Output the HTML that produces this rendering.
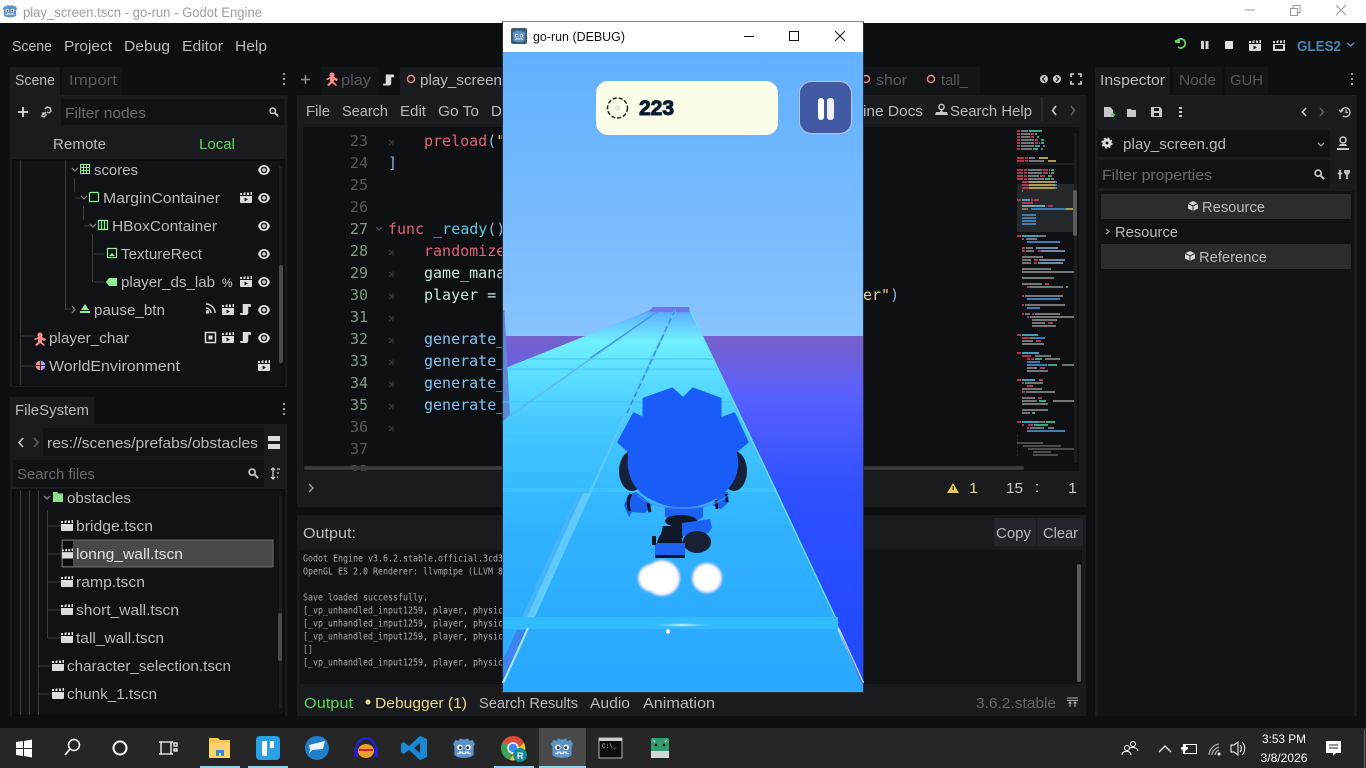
<!DOCTYPE html>
<html><head><meta charset="utf-8"><title>go-run</title>
<style>
html,body{margin:0;padding:0;width:1366px;height:768px;overflow:hidden;background:#0e0f11}
svg{display:block;position:absolute;left:0;top:0}
text{font-family:"Liberation Sans",sans-serif;font-size:15px;fill:#b9babc}
.d{fill:#57585c}
.m{font-family:"DejaVu Sans Mono","Liberation Mono",monospace;font-size:15px}
.l{font-family:"DejaVu Sans Mono","Liberation Mono",monospace;font-size:10px;fill:#a9aaac}
.n{fill:#55585a;text-anchor:end}
.g{fill:#7d9c80;text-anchor:end}
</style></head><body>
<svg width="1366" height="768" viewBox="0 0 1366 768" xmlns="http://www.w3.org/2000/svg">
<defs>
<symbol id="god" viewBox="0 0 16 16"><path d="M5 1l3 1 3-1 1 2 2-1 2 3-1 2v6c-2 3-12 3-14 0V7L0 5l2-3 2 1z" fill="#5c93c8"/><circle cx="5" cy="7.5" r="2" fill="#fff"/><circle cx="11" cy="7.5" r="2" fill="#fff"/><circle cx="5.3" cy="7.7" r="1" fill="#223"/><circle cx="10.7" cy="7.7" r="1" fill="#223"/><path d="M3 12h2v-1h2v1h2v-1h2v1h2" stroke="#dfe9f5" fill="none"/></symbol>
<symbol id="clap" viewBox="0 0 12 11"><path d="M0 4h12v6a1 1 0 0 1-1 1H1a1 1 0 0 1-1-1zM0 1h2v2H0zM3.500 1l2-1v3h-2zM7 .5h2V3H7zM10.500 0H12v3h-1.500z" fill="#dcdcde"/></symbol>
<symbol id="clapp" viewBox="0 0 12 11"><path d="M0 4h12v6a1 1 0 0 1-1 1H1a1 1 0 0 1-1-1zM0 1h2v2H0zM3.500 1l2-1v3h-2zM7 .5h2V3H7zM10.500 0H12v3h-1.500z" fill="#dcdcde"/><path d="M4.500 5.500l3.500 2-3.500 2z" fill="#18191c"/></symbol>
<symbol id="scr" viewBox="0 0 12 12"><path d="M3 0h8c1 0 1 2 1 3H9v6c0 2-1 3-2 3H1c-1 0-1-1-1-2h3z" fill="#dcdcde"/></symbol>
<symbol id="eye" viewBox="0 0 12 10"><path d="M6 0c3.300 0 5.500 3 6 5-.5 2-2.700 5-6 5S.5 7 0 5c.5-2 2.700-5 6-5z" fill="#dcdcde"/><circle cx="6" cy="5" r="3.200" fill="#15161a"/><circle cx="6" cy="5" r="1.700" fill="#dcdcde"/></symbol>
<symbol id="mag" viewBox="0 0 12 12"><circle cx="4.500" cy="4.500" r="3.300" fill="none" stroke="#c8c8ca" stroke-width="1.800"/><path d="M7 7l4 4" stroke="#c8c8ca" stroke-width="2.200"/></symbol>
<linearGradient id="sky" x1="0" y1="0" x2="0" y2="1"><stop offset="0" stop-color="#62b0ff"/><stop offset="1" stop-color="#87c3ff"/></linearGradient>
<linearGradient id="sea" x1="0" y1="0" x2="0" y2="1"><stop offset="0" stop-color="#7660cc"/><stop offset=".08" stop-color="#6a60e0"/><stop offset=".16" stop-color="#5a60ff"/><stop offset=".45" stop-color="#2c50ff"/><stop offset="1" stop-color="#2248ff"/></linearGradient>
<linearGradient id="road" gradientUnits="userSpaceOnUse" x1="0" y1="307" x2="0" y2="692"><stop offset="0" stop-color="#6a78ee"/><stop offset=".02" stop-color="#60b4ff"/><stop offset=".09" stop-color="#70f0ff"/><stop offset=".17" stop-color="#5cdfff"/><stop offset=".3" stop-color="#46c8ff"/><stop offset=".47" stop-color="#36baff"/><stop offset=".6" stop-color="#30b0ff"/><stop offset="1" stop-color="#2aa8ff"/></linearGradient>
<radialGradient id="gl"><stop offset="0" stop-color="#e8fcff"/><stop offset="1" stop-color="#35c4ff" stop-opacity="0"/></radialGradient>
<filter id="soft" x="-20%" y="-20%" width="140%" height="140%"><feGaussianBlur stdDeviation="1"/></filter>
<clipPath id="codeclip"><rect x="303" y="127" width="776" height="344"/></clipPath>
<clipPath id="logclip"><rect x="300" y="550" width="782" height="134"/></clipPath>
</defs>

<!-- base -->
<rect width="1366" height="768" fill="#0e0f11"/>
<!-- title bar -->
<rect width="1366" height="23" fill="#fff"/>
<use href="#god" x="3" y="4" width="14" height="14"/>
<text x="23" y="17" style="font-size:13.500px;fill:#9d9da3" textLength="239" lengthAdjust="spacingAndGlyphs">play_screen.tscn - go-run - Godot Engine</text>
<path d="M1245 10h10" stroke="#999" stroke-width="1"/>
<path d="M1290.500 8.500h7v7h-7zM1293 8V5.500h7v7h-2" fill="none" stroke="#999"/>
<path d="M1336 5l10 10M1346 5l-10 10" stroke="#999"/>

<!-- menu -->
<text x="12" y="51" textLength="40" lengthAdjust="spacingAndGlyphs">Scene</text>
<text x="64" y="51" textLength="48" lengthAdjust="spacingAndGlyphs">Project</text>
<text x="124" y="51" textLength="46" lengthAdjust="spacingAndGlyphs">Debug</text>
<text x="182" y="51" textLength="41" lengthAdjust="spacingAndGlyphs">Editor</text>
<text x="235" y="51" textLength="32" lengthAdjust="spacingAndGlyphs">Help</text>
<!-- run bar -->
<path d="M1176.500 42a4.500 4.500 0 1 1 1.500 5" fill="none" stroke="#5fd35f" stroke-width="1.800"/><path d="M1175 40h5v3h-5z" fill="#5fd35f"/>
<path d="M1201 41h3v8h-3zM1205.500 41h3v8h-3z" fill="#d0d0d2"/>
<rect x="1225" y="41" width="8" height="8" rx="1" fill="#e0e0e2"/>
<use href="#clapp" x="1249" y="40" width="12" height="11"/>
<use href="#clap" x="1273" y="40" width="12" height="11"/>
<rect x="1275" y="45" width="8" height="4" fill="#18191c"/>
<text x="1297" y="51" style="font-weight:bold;fill:#4a86ad;font-size:15px" textLength="44" lengthAdjust="spacingAndGlyphs">GLES2</text>
<path d="M1347 43l3.500 3 3.500-3" fill="none" stroke="#4a86ad" stroke-width="1.500"/>

<!-- LEFT: Scene dock -->
<rect x="10" y="67" width="50" height="28" fill="#1a1b1e"/>
<rect x="62" y="67" width="60" height="28" fill="#131417"/>
<text x="15" y="85" textLength="40" lengthAdjust="spacingAndGlyphs">Scene</text>
<text x="69" y="85" class="d" textLength="48" lengthAdjust="spacingAndGlyphs">Import</text>
<path d="M283 73h2v2h-2zM283 78h2v2h-2zM283 83h2v2h-2z" fill="#a0a0a2"/>
<rect x="10" y="95" width="277" height="292" fill="#1a1b1e"/>
<path d="M23 107v10M18 112h10" stroke="#dcdcde" stroke-width="1.800"/>
<path d="M43 115l3-3m-1-3l2-2 3 1 1 3-2 2-2-1M42 116l1-3 2 0 1 2-2 2z" fill="none" stroke="#b8b8ba" stroke-width="1.500"/>
<rect x="61" y="99" width="223" height="26" fill="#111215"/>
<text x="65" y="118" style="fill:#686a6e" textLength="81" lengthAdjust="spacingAndGlyphs">Filter nodes</text>
<use href="#mag" x="269" y="107" width="10" height="10"/>
<text x="53" y="149" textLength="53" lengthAdjust="spacingAndGlyphs">Remote</text>
<text x="199" y="149" style="fill:#5fd35f" textLength="36" lengthAdjust="spacingAndGlyphs">Local</text>
<rect x="13" y="160" width="271" height="225" fill="#111215"/>
<rect x="13" y="160" width="271" height="225" fill="none" stroke="#0c0d0f" stroke-width="2"/>
<path d="M20.500 160v225M65.500 160v150M74.500 178v14M83.500 206v14M92.500 234v48M94 254h10M94 282h10M66 309h5M21 336h14M21 366h14M75 198h5M84 226h5" stroke="#3a3b3e" fill="none"/>
<path d="M72 168l3 3 3-3M81 196l3 3 3-3M90 224l3 3 3-3" fill="none" stroke="#808184" stroke-width="1.300"/>
<path d="M72 306l3 3.500-3 3.500" fill="none" stroke="#808184" stroke-width="1.300"/>
<!-- node icons -->
<path d="M80.500 164.500h9v9h-9zM83.500 164.500v9M86.500 164.500v9M80.500 167.500h9M80.500 170.500h9" fill="none" stroke="#8eef97"/>
<rect x="89.500" y="192.500" width="9" height="9" rx="1" fill="none" stroke="#8eef97" stroke-width="1.200"/>
<path d="M98.500 220.500h9v9h-9zM101.500 220.500v9M104.500 220.500v9" fill="none" stroke="#8eef97" stroke-width="1.200"/>
<rect x="107.500" y="248.500" width="9" height="9" fill="none" stroke="#8eef97" stroke-width="1.200"/><path d="M109 256l3-3 3 3z" fill="#8eef97"/>
<path d="M109 278h8v8h-8l-3-4z" fill="#8eef97"/>
<path d="M85 304l4 6h-8zM80 311h10v2H80z" fill="#8eef97"/>
<g fill="#ff8a8a"><circle cx="40" cy="335" r="2.500"/><path d="M38 337h4l4 2-1 2-3-1v2l3 3-1 1-4-3-3 3-2-1 3-3v-3l-3 1-1-1z"/></g>
<circle cx="40.500" cy="365.500" r="4.800" fill="#a8a0f0"/><path d="M40.500 360.700a4.800 4.800 0 0 0 0 9.600z" fill="#ff8a8a"/><path d="M35.700 365.500h10M40.500 360.700v10" stroke="#15161a" stroke-width=".8"/>
<!-- tree labels -->
<text x="94" y="175" textLength="44" lengthAdjust="spacingAndGlyphs">scores</text>
<text x="103" y="203" textLength="117" lengthAdjust="spacingAndGlyphs">MarginContainer</text>
<text x="112" y="231" textLength="105" lengthAdjust="spacingAndGlyphs">HBoxContainer</text>
<text x="121" y="259" textLength="81" lengthAdjust="spacingAndGlyphs">TextureRect</text>
<text x="121" y="287" textLength="94" lengthAdjust="spacingAndGlyphs">player_ds_lab</text>
<text x="94" y="315" textLength="71" lengthAdjust="spacingAndGlyphs">pause_btn</text>
<text x="49" y="343" textLength="80" lengthAdjust="spacingAndGlyphs">player_char</text>
<text x="49" y="371" textLength="131" lengthAdjust="spacingAndGlyphs">WorldEnvironment</text>
<g>
<use href="#eye" x="258" y="165" width="12" height="10"/>
<use href="#eye" x="258" y="193" width="12" height="10"/>
<use href="#eye" x="258" y="221" width="12" height="10"/>
<use href="#eye" x="258" y="249" width="12" height="10"/>
<use href="#eye" x="258" y="277" width="12" height="10"/>
<use href="#eye" x="258" y="305" width="12" height="10"/>
<use href="#eye" x="258" y="333" width="12" height="10"/>
<use href="#clapp" x="240" y="192" width="12" height="11"/>
<use href="#clapp" x="240" y="276" width="12" height="11"/>
<use href="#clapp" x="222" y="304" width="12" height="11"/>
<use href="#clapp" x="222" y="332" width="12" height="11"/>
<use href="#clapp" x="258" y="360" width="12" height="11"/>
<use href="#scr" x="240" y="304" width="11" height="11"/>
<use href="#scr" x="240" y="332" width="11" height="11"/>
</g>
<text x="222" y="287" style="font-size:12px;fill:#d8d8da">%</text>
<path d="M206 304a9 9 0 0 1 9 9M206 308a5 5 0 0 1 5 5" fill="none" stroke="#d0d0d2" stroke-width="1.500"/><circle cx="207.500" cy="312" r="1.800" fill="#d0d0d2"/>
<rect x="205.500" y="332.500" width="10" height="10" fill="none" stroke="#dcdcde" stroke-width="1.500"/><rect x="208.500" y="335.500" width="4" height="4" fill="#dcdcde"/>
<rect x="279" y="166" width="3" height="198" fill="#1d1e21"/>
<rect x="279" y="265" width="4" height="98" rx="2" fill="#4a4b4e"/>

<!-- FileSystem dock -->
<rect x="10" y="397" width="84" height="27" fill="#1a1b1e"/>
<text x="15" y="415" textLength="74" lengthAdjust="spacingAndGlyphs">FileSystem</text>
<path d="M283 403h2v2h-2zM283 408h2v2h-2zM283 413h2v2h-2z" fill="#a0a0a2"/>
<rect x="10" y="424" width="277" height="292" fill="#1a1b1e"/>
<path d="M23 438l-4 4.500 4 4.500" fill="none" stroke="#c8c8ca" stroke-width="1.600"/><path d="M34 438l4 4.500-4 4.500" fill="none" stroke="#5c5d60" stroke-width="1.600"/>
<rect x="43" y="428" width="221" height="28" fill="#111215"/>
<text x="47" y="448" textLength="211" lengthAdjust="spacingAndGlyphs">res://scenes/prefabs/obstacles</text>
<path d="M268 436h12v5h-12zM268 444h12v5h-12z" fill="#dcdcde"/>
<rect x="13" y="460" width="251" height="27" fill="#111215"/>
<text x="17" y="479" style="fill:#686a6e" textLength="78" lengthAdjust="spacingAndGlyphs">Search files</text>
<use href="#mag" x="248" y="468" width="11" height="11"/>
<path d="M273 468v11M271 470l2-2 2 2M271 477l2 2 2-2M277 469h3M277 473h2M277 477h1" fill="none" stroke="#c8c8ca" stroke-width="1.300"/>
<rect x="13" y="490" width="271" height="225" fill="#111215"/>
<rect x="13" y="490" width="271" height="225" fill="none" stroke="#0c0d0f" stroke-width="2"/>
<path d="M20.500 490v225M29.500 490v225M38.500 490v225M47.500 510v128M48 526h14M48 554h14M48 582h14M48 610h14M48 638h14M39 666h14M39 694h14" fill="none" stroke="#3a3b3e"/>
<path d="M44 496l3 3 3-3" fill="none" stroke="#808184" stroke-width="1.300"/>
<path d="M53 492h4l1.500 1.500H63V502H53z" fill="#8be08b"/>
<rect x="62" y="540" width="211" height="27" fill="#48494b"/><rect x="62" y="540" width="211" height="27" fill="none" stroke="#6a6b6d"/>
<rect x="63" y="541" width="10" height="25" fill="#0b0b0d"/>
<use href="#clap" x="61" y="520" width="12" height="11"/>
<use href="#clap" x="62" y="548" width="11" height="11"/>
<use href="#clap" x="61" y="576" width="12" height="11"/>
<use href="#clap" x="61" y="604" width="12" height="11"/>
<use href="#clap" x="61" y="632" width="12" height="11"/>
<use href="#clap" x="52" y="660" width="12" height="11"/>
<use href="#clap" x="52" y="688" width="12" height="11"/>
<text x="67" y="503" textLength="64" lengthAdjust="spacingAndGlyphs">obstacles</text>
<text x="76" y="531" textLength="77" lengthAdjust="spacingAndGlyphs">bridge.tscn</text>
<text x="76" y="559" style="fill:#e0e0e2" textLength="107" lengthAdjust="spacingAndGlyphs">lonng_wall.tscn</text>
<text x="76" y="587" textLength="69" lengthAdjust="spacingAndGlyphs">ramp.tscn</text>
<text x="76" y="615" textLength="103" lengthAdjust="spacingAndGlyphs">short_wall.tscn</text>
<text x="76" y="643" textLength="88" lengthAdjust="spacingAndGlyphs">tall_wall.tscn</text>
<text x="67" y="671" textLength="164" lengthAdjust="spacingAndGlyphs">character_selection.tscn</text>
<text x="67" y="699" textLength="90" lengthAdjust="spacingAndGlyphs">chunk_1.tscn</text>
<rect x="279" y="496" width="3" height="212" fill="#1d1e21"/>
<rect x="278" y="613" width="4" height="48" rx="2" fill="#4a4b4e"/>

<!-- CENTER -->
<path d="M301 79.500h9M305.500 75v9" stroke="#8a8b8e" stroke-width="1.600"/>
<rect x="321" y="67" width="58" height="28" fill="#131417"/>
<g fill="#ff8a8a"><circle cx="332" cy="75" r="2.500"/><path d="M330 77h4l4 2-1 2-3-1v2l3 3-1 1-4-3-3 3-2-1 3-3v-3l-3 1-1-1z"/></g>
<text x="341" y="85" class="d" textLength="30" lengthAdjust="spacingAndGlyphs">play</text>
<use href="#scr" x="383" y="74" width="11" height="12"/>
<rect x="400" y="67" width="110" height="28" fill="#1a1b1e"/>
<circle cx="411" cy="79" r="3.500" fill="none" stroke="#e88a8a" stroke-width="1.500"/>
<text x="420" y="85" textLength="82" lengthAdjust="spacingAndGlyphs">play_screen</text>
<rect x="860" y="67" width="60" height="28" fill="#131417"/>
<circle cx="866" cy="79" r="3.500" fill="none" stroke="#e88a8a" stroke-width="1.500"/>
<text x="876" y="85" class="d" textLength="31" lengthAdjust="spacingAndGlyphs">shor</text>
<rect x="920" y="67" width="60" height="28" fill="#131417"/>
<circle cx="931" cy="79" r="3.500" fill="none" stroke="#e88a8a" stroke-width="1.500"/>
<text x="941" y="85" class="d" textLength="27" lengthAdjust="spacingAndGlyphs">tall_</text>
<circle cx="1044" cy="79" r="4" fill="#c8c8ca"/><path d="M1045 76.500l-2.500 2.500 2.500 2.500" fill="none" stroke="#111" stroke-width="1.200"/>
<circle cx="1057" cy="79" r="4" fill="#c8c8ca"/><path d="M1056 76.500l2.500 2.500-2.500 2.500" fill="none" stroke="#111" stroke-width="1.200"/>
<path d="M1071 77v-3h3M1078 74h3v3M1081 81v3h-3M1074 84h-3v-3" fill="none" stroke="#d0d0d2" stroke-width="1.600"/>

<rect x="297" y="95" width="789" height="412" fill="#1a1b1e"/>
<text x="306" y="116" textLength="24" lengthAdjust="spacingAndGlyphs">File</text>
<text x="342" y="116" textLength="46" lengthAdjust="spacingAndGlyphs">Search</text>
<text x="400" y="116" textLength="26" lengthAdjust="spacingAndGlyphs">Edit</text>
<text x="438" y="116" textLength="41" lengthAdjust="spacingAndGlyphs">Go To</text>
<text x="491" y="116">D</text>
<text x="863" y="116" textLength="60" lengthAdjust="spacingAndGlyphs">ine Docs</text>
<circle cx="941.500" cy="107" r="2.600" fill="none" stroke="#c8c8ca" stroke-width="1.400"/><path d="M941 110l-1 2h-4l-1 3h13l-1-3h-4l-1-2z" fill="#c8c8ca"/>
<text x="950" y="116" textLength="82" lengthAdjust="spacingAndGlyphs">Search Help</text>
<rect x="1041" y="97" width="2" height="24" fill="#2a2b2e"/>
<path d="M1056 106l-3.500 4.500 3.500 4.500" fill="none" stroke="#c8c8ca" stroke-width="1.600"/><path d="M1071 106l3.500 4.500-3.500 4.500" fill="none" stroke="#5c5d60" stroke-width="1.600"/>

<rect x="303" y="127" width="776" height="344" fill="#0f1013"/>
<g clip-path="url(#codeclip)" class="m">
<text x="368" y="146" class="m n">23</text>
<text x="368" y="168" class="m n">24</text>
<text x="368" y="190" class="m n">25</text>
<text x="368" y="212" class="m n">26</text>
<text x="368" y="234" class="m g">27</text>
<text x="368" y="256" class="m g">28</text>
<text x="368" y="278" class="m g">29</text>
<text x="368" y="300" class="m g">30</text>
<text x="368" y="322" class="m g">31</text>
<text x="368" y="344" class="m g">32</text>
<text x="368" y="366" class="m g">33</text>
<text x="368" y="388" class="m g">34</text>
<text x="368" y="410" class="m g">35</text>
<text x="368" y="432" class="m n">36</text>
<text x="368" y="454" class="m n">37</text>
<text x="368" y="476" class="m n">38</text>
<path d="M376 227l3 3 3-3" fill="none" stroke="#55585a" stroke-width="1.200"/>
<path d="M389 140l3 2.500-3 2.500M393 139.500v6M389 250l3 2.500-3 2.500M393 249.500v6M389 272l3 2.500-3 2.500M393 271.500v6M389 294l3 2.500-3 2.500M393 293.500v6M389 316l3 2.500-3 2.500M393 315.500v6M389 338l3 2.500-3 2.500M393 337.500v6M389 360l3 2.500-3 2.500M393 359.500v6M389 382l3 2.500-3 2.500M393 381.500v6M389 404l3 2.500-3 2.500M393 403.500v6M389 426l3 2.500-3 2.500M393 425.500v6" fill="none" stroke="#3a3d42"/>
<text x="424" y="146" class="m" style="fill:#e0637a">preload<tspan style="fill:#8fb0d8">(</tspan><tspan style="fill:#e8d98a">"</tspan></text>
<text x="388" y="168" class="m" style="fill:#8fb0d8">]</text>
<text x="388" y="234" class="m" style="fill:#e0637a">func <tspan style="fill:#57c8e0">_ready</tspan><tspan style="fill:#8fb0d8">()</tspan></text>
<text x="424" y="256" class="m" style="fill:#e0637a">randomize</text>
<text x="424" y="278" class="m" style="fill:#c4ecdd">game_mana</text>
<text x="424" y="300" class="m" style="fill:#c4ecdd">player =</text>
<text x="863" y="300" class="m" style="fill:#e8d98a">er"<tspan style="fill:#8fb0d8">)</tspan></text>
<text x="424" y="344" class="m" style="fill:#7fc4f0">generate_</text>
<text x="424" y="366" class="m" style="fill:#7fc4f0">generate_</text>
<text x="424" y="388" class="m" style="fill:#7fc4f0">generate_</text>
<text x="424" y="410" class="m" style="fill:#7fc4f0">generate_</text>
</g>
<!-- minimap -->
<rect x="1017" y="184" width="58" height="48" fill="#26282b"/>
<rect x="1017" y="163" width="60" height="2" fill="#1e1f22"/>
<g fill="none" stroke-width="2">
<path stroke="#a83a55" d="M1017 131h3M1017 134h3M1031 134h3M1017 137h3M1031 137h3M1017 140h3M1035 140h3M1017 143h3M1035 143h3M1017 146h3M1017 149h3M1017 158h7M1025 158h3M1017 161h7M1025 161h3M1017 170h6M1024 170h3M1043 170h5M1017 173h6M1024 173h3M1043 173h5M1017 176h6M1024 176h3M1040 176h5M1017 179h6M1024 179h3M1022 182h7M1022 185h7M1022 188h7M1017 200h4M1031 200h2M1034 200h5M1022 203h11M1048 206h5M1017 236h4M1022 239h2M1022 248h3M1022 251h3M1038 251h3M1034 260h4M1034 263h3M1045 284h4M1027 287h3M1022 296h2M1022 305h2M1022 314h2M1032 314h2M1027 317h2M1048 323h5M1017 335h4M1022 338h8M1036 341h5M1017 353h4M1022 356h9M1027 359h3M1031 359h3M1040 368h5M1017 380h4M1039 380h4M1022 383h2M1027 386h6M1022 392h3M1038 398h4M1017 422h4M1022 425h2M1028 425h5M1027 428h2"/>
<path stroke="#737477" d="M1021 131h7M1021 134h9M1035 134h2M1021 137h9M1021 140h13M1021 143h13M1039 143h1M1021 146h13M1021 149h11M1041 149h2M1029 158h6M1029 161h15M1028 170h14M1049 170h1M1028 173h14M1049 173h1M1028 176h11M1028 179h16M1051 179h3M1022 209h6M1022 248h0M1026 239h11M1026 248h7M1026 251h8M1022 257h21M1022 260h9M1039 260h11M1022 263h9M1038 263h11M1022 269h29M1022 272h52M1022 278h32M1022 284h20M1030 287h33M1025 296h38M1025 305h40M1025 314h5M1035 314h25M1030 317h47M1032 320h25M1032 323h13M1032 326h24M1030 338h4M1022 341h11M1022 344h22M1038 236h8M1035 356h16M1045 359h15M1062 365h14M1027 368h10M1027 371h21M1025 383h18M1022 389h20M1026 392h29M1022 398h13M1022 401h15M1053 401h24M1022 404h26M1022 410h26M1022 413h8M1022 422h0M1038 422h7M1034 425h0M1030 428h14M1048 428h6"/>
<path stroke="#3aa58a" d="M1029 131h13M1037 137h2M1041 140h3M1041 143h3M1035 146h5M1033 149h5M1051 170h3M1051 173h3M1048 176h4M1045 179h5M1045 359h0M1035 359h7M1048 365h9M1039 401h7M1032 413h3M1046 422h9M1034 425h14M1066 287h2"/>
<path stroke="#a89a5a" d="M1039 158h9M1048 161h8M1029 182h26M1029 185h26M1029 188h26M1066 209h9"/>
<path stroke="#3f7cb0" d="M1022 215h14M1022 218h14M1022 221h14M1022 224h14M1031 209h35M1027 242h33M1027 299h33M1027 308h13M1027 362h13M1027 365h20M1034 338h11M1027 431h38M1043 146h2M1055 182h2M1055 185h2M1055 188h2M1022 191h1"/>
<path stroke="#6f8aa0" d="M1036 248h22M1041 251h24M1040 260h25M1039 263h24M1034 206h1M1034 206h0M1034 206h1"/>
<path stroke="#7fa0a0" d="M1022 206h12M1034 206h11"/>
<path stroke="#3fa0b8" d="M1022 200h8M1022 236h16M1022 335h16M1022 353h17M1022 380h13M1022 422h16"/>
<path stroke="#4a4b4e" d="M1017 443h26M1023 446h38M1028 449h49M1033 452h18M1033 455h25"/>
<path stroke="#3f4043" stroke-width="1" d="M1017 436h1M1017 440h1M1017 447h1M1017 451h1M1017 455h1"/>
</g>
<rect x="1074" y="133" width="3" height="330" fill="#1c1d20"/>
<rect x="1073" y="190" width="4" height="46" rx="2" fill="#5a5b5e"/>
<rect x="304" y="466" width="720" height="4" rx="2" fill="#3a3b3e"/>
<!-- status -->
<path d="M309 484l4 4-4 4" fill="none" stroke="#a0a0a2" stroke-width="1.400"/>
<path d="M953 483l6 10h-12z" fill="#e8c860"/><rect x="952.500" y="486" width="1.200" height="4" fill="#222"/>
<text x="969" y="493" style="fill:#e8d98a" textLength="9" lengthAdjust="spacingAndGlyphs">1</text>
<text x="1006" y="493" style="fill:#c8c8ca" textLength="17" lengthAdjust="spacingAndGlyphs">15</text>
<text x="1035" y="492" style="fill:#c8c8ca">:</text>
<text x="1068" y="493" style="fill:#c8c8ca" textLength="9" lengthAdjust="spacingAndGlyphs">1</text>

<!-- Output panel -->
<rect x="297" y="515" width="789" height="201" fill="#1a1b1e"/>
<text x="303" y="538" textLength="53" lengthAdjust="spacingAndGlyphs">Output:</text>
<rect x="994" y="518" width="42" height="28" fill="#24252a"/>
<rect x="1037" y="518" width="46" height="28" fill="#24252a"/>
<text x="996" y="538" textLength="35" lengthAdjust="spacingAndGlyphs">Copy</text>
<text x="1043" y="538" textLength="35" lengthAdjust="spacingAndGlyphs">Clear</text>
<rect x="300" y="550" width="782" height="134" fill="#111215"/>
<g clip-path="url(#logclip)">
<text x="303" y="561.500" class="l" textLength="200" lengthAdjust="spacingAndGlyphs">Godot Engine v3.6.2.stable.official.3cd3</text>
<text x="303" y="574.500" class="l" textLength="200" lengthAdjust="spacingAndGlyphs">OpenGL ES 2.0 Renderer: llvmpipe (LLVM 8</text>
<text x="303" y="600.500" class="l" textLength="125" lengthAdjust="spacingAndGlyphs">Save loaded successfully.</text>
<text x="303" y="613.500" class="l" textLength="200" lengthAdjust="spacingAndGlyphs">[_vp_unhandled_input1259, player, physic</text>
<text x="303" y="626.500" class="l" textLength="200" lengthAdjust="spacingAndGlyphs">[_vp_unhandled_input1259, player, physic</text>
<text x="303" y="639.500" class="l" textLength="200" lengthAdjust="spacingAndGlyphs">[_vp_unhandled_input1259, player, physic</text>
<text x="303" y="652.500" class="l" textLength="10" lengthAdjust="spacingAndGlyphs">[]</text>
<text x="303" y="665.500" class="l" textLength="200" lengthAdjust="spacingAndGlyphs">[_vp_unhandled_input1259, player, physic</text>
</g>
<rect x="1077" y="564" width="4" height="118" rx="2" fill="#5a5b5e"/>
<text x="304" y="708" style="fill:#5fd35f" textLength="49" lengthAdjust="spacingAndGlyphs">Output</text>
<circle cx="368" cy="702" r="2.500" fill="#e8d98a"/>
<text x="375" y="708" style="fill:#e8d98a" textLength="92" lengthAdjust="spacingAndGlyphs">Debugger (1)</text>
<text x="479" y="708" textLength="99" lengthAdjust="spacingAndGlyphs">Search Results</text>
<text x="590" y="708" textLength="40" lengthAdjust="spacingAndGlyphs">Audio</text>
<text x="643" y="708" textLength="72" lengthAdjust="spacingAndGlyphs">Animation</text>
<text x="976" y="708" style="fill:#66676a" textLength="80" lengthAdjust="spacingAndGlyphs">3.6.2.stable</text>
<path d="M1067 698h11M1067 700.500h11" stroke="#b0b0b2"/><path d="M1070 707v-5M1068.500 703.500l1.500-1.500 1.500 1.500M1075 707v-5M1073.500 703.500l1.500-1.500 1.500 1.500" fill="none" stroke="#b0b0b2"/>

<!-- Inspector -->
<rect x="1095" y="67" width="75" height="28" fill="#1a1b1e"/>
<rect x="1173" y="67" width="49" height="28" fill="#131417"/>
<rect x="1225" y="67" width="43" height="28" fill="#131417"/>
<text x="1100" y="85" textLength="65" lengthAdjust="spacingAndGlyphs">Inspector</text>
<text x="1179" y="85" class="d" textLength="37" lengthAdjust="spacingAndGlyphs">Node</text>
<text x="1230" y="85" class="d" textLength="33" lengthAdjust="spacingAndGlyphs">GUH</text>
<path d="M1351 73h2v2h-2zM1351 78h2v2h-2zM1351 83h2v2h-2z" fill="#a0a0a2"/>
<rect x="1095" y="95" width="262" height="621" fill="#1a1b1e"/>
<path d="M1104 107h6l3 3v7h-9z" fill="#c8c8ca"/><path d="M1111 115h4M1113 113v4" stroke="#5fd35f" stroke-width="1.500"/>
<path d="M1127 109h4l1 1h4v7h-9z" fill="#c8c8ca"/>
<path d="M1151 107h9l2 2v8h-11z" fill="#c8c8ca"/><rect x="1154" y="108" width="5" height="3" fill="#1a1b1e"/><rect x="1154" y="113" width="5" height="3" fill="#1a1b1e"/>
<path d="M1179 107h3v2h-3zM1179 111h3v2h-3zM1179 115h3v2h-3z" fill="#c8c8ca"/>
<path d="M1306 108l-3.500 4 3.500 4" fill="none" stroke="#c8c8ca" stroke-width="1.600"/><path d="M1320 108l3.500 4-3.500 4" fill="none" stroke="#5c5d60" stroke-width="1.600"/>
<path d="M1341 112a4.500 4.500 0 1 1 2 4M1339 110l2 2 2-2M1346 109.500v3h2" fill="none" stroke="#c8c8ca" stroke-width="1.300"/>
<rect x="1098" y="130" width="232" height="27" fill="#111215"/>
<circle cx="1107" cy="143" r="3" fill="none" stroke="#dcdcde" stroke-width="3"/><circle cx="1107" cy="143" r="5" fill="none" stroke="#dcdcde" stroke-width="1.200" stroke-dasharray="2 2"/>
<text x="1123" y="149" textLength="103" lengthAdjust="spacingAndGlyphs">play_screen.gd</text>
<path d="M1318 143l3 3 3-3" fill="none" stroke="#a0a0a2" stroke-width="1.300"/>
<circle cx="1343" cy="140" r="3" fill="none" stroke="#c8c8ca" stroke-width="1.500"/><path d="M1340 144l-1 2h8l-1-2M1337 148h12v2h-12z" fill="#c8c8ca"/>
<rect x="1098" y="160" width="232" height="28" fill="#111215"/>
<text x="1102" y="180" style="fill:#686a6e" textLength="110" lengthAdjust="spacingAndGlyphs">Filter properties</text>
<use href="#mag" x="1314" y="169" width="11" height="11"/>
<path d="M1340 170v9M1347 170v9M1338 173a3 3 0 0 0 4 0M1345 170v2a2 2 0 0 0 4 0v-2" fill="none" stroke="#c8c8ca" stroke-width="1.800"/>
<rect x="1098" y="191" width="256" height="525" fill="#111215"/>
<rect x="1101" y="194" width="250" height="25" fill="#2b2c2f"/>
<rect x="1101" y="244" width="250" height="25" fill="#2b2c2f"/>
<path d="M1193 201l5 2.500v5l-5 2.500-5-2.500v-5z" fill="#d8d8da"/><path d="M1188 203.500l5 2.500 5-2.500M1193 206v5" fill="none" stroke="#2b2c2f"/>
<path d="M1190 251l5 2.500v5l-5 2.500-5-2.500v-5z" fill="#d8d8da"/><path d="M1185 253.500l5 2.500 5-2.500M1190 256v5" fill="none" stroke="#2b2c2f"/>
<text x="1202" y="212" textLength="63" lengthAdjust="spacingAndGlyphs">Resource</text>
<path d="M1106 229l3 2.500-3 2.500" fill="none" stroke="#a0a0a2" stroke-width="1.200"/>
<text x="1115" y="237" textLength="63" lengthAdjust="spacingAndGlyphs">Resource</text>
<text x="1199" y="262" textLength="68" lengthAdjust="spacingAndGlyphs">Reference</text>

<!-- GAME WINDOW -->
<rect x="502" y="21" width="362" height="672" fill="#2c2d30"/>
<rect x="502" y="21" width="362" height="1" fill="#8a8a8a"/>
<rect x="503" y="22" width="360" height="30" fill="#fff"/>
<rect x="511" y="28" width="16" height="16" rx="2" fill="#3a5a78"/>
<use href="#god" x="512.500" y="29.500" width="13" height="13"/>
<text x="533" y="41" style="font-size:13px;fill:#111" textLength="92" lengthAdjust="spacingAndGlyphs">go-run (DEBUG)</text>
<path d="M744 36.500h10" stroke="#111"/>
<rect x="789.500" y="31.500" width="9" height="9" fill="none" stroke="#111"/>
<path d="M835 31l10 10M845 31l-10 10" stroke="#111"/>
<rect x="503" y="52" width="360" height="284" fill="url(#sky)"/>
<rect x="503" y="336" width="360" height="356" fill="url(#sea)"/>
<!-- road -->
<path d="M655 308h34l88 185 60 130 26 62v7H503V369z" fill="url(#road)"/>
<path d="M653 307h36l1 5h-42z" fill="#6c78ea"/>
<!-- left sliver -->
<path d="M503 310l1.500 0 5.500 106-7 5z" fill="#5c88d8"/>
<!-- horizontal lines -->
<path d="M530 359h183M507 369h210M503 402h230" stroke="#40c4f0" stroke-width="1"/>
<path d="M503 433h247" stroke="#48ccfa" stroke-width="1"/>
<rect x="503" y="488" width="273" height="4" fill="#3cc2ff"/>
<!-- lane separators -->
<path d="M675 310L621 424 590 493 528 628 503 683" fill="none" stroke="#5ac8ff" stroke-width="2.500"/>
<path d="M675 310L627 413" fill="none" stroke="#3a8ce0" stroke-width="1.400" stroke-dasharray="6 3"/>
<path d="M657 312L507 418" fill="none" stroke="#60b8ee" stroke-width="1.500"/>
<path d="M657 312L590 358" fill="none" stroke="#3a90e0" stroke-width="1"/>
<path d="M590 493L578 493 517 628 528 628z" fill="#45b4fa"/>
<path d="M583 493L590 493 530 628 522 628z" fill="#6ad2ff" opacity=".7"/>
<!-- right edge highlight -->
<path d="M690 310L777 493 838 623" fill="none" stroke="#66dcff" stroke-width="1.500"/>
<path d="M838 628L863 683" stroke="#b0e0ff" stroke-width="2.500"/>
<path d="M838 628L861 683h2z" fill="#4a70f0"/>
<path d="M863 684L863 692H503V684z" fill="#2aa8ff"/>
<!-- band -->
<rect x="503" y="617" width="335" height="12" fill="#32bcff"/>
<ellipse cx="682" cy="625" rx="32" ry="2.500" fill="url(#gl)"/>
<circle cx="668" cy="631.500" r="2.200" fill="#fff"/>
<path d="M503 660l14-30h10l-24 54z" fill="#3c84f0"/>
<path d="M503 683l25-55" stroke="#a8e4ff" stroke-width="2"/>
<!-- character -->
<ellipse cx="632" cy="471" rx="13" ry="20" fill="#172038"/>
<ellipse cx="734" cy="471" rx="13" ry="20" fill="#172038"/>
<path d="M628 495l8-3 9 7 7 6-7 8-13-1-3 5-5-12z" fill="#1a60f0"/>
<path d="M631 494c-3 5-4 12-1 17M648 503l2 9" stroke="#0c1428" stroke-width="3" fill="none"/>
<path d="M712 505l10-13h6l1 10-8 7z" fill="#1a60f0"/>
<path d="M716 500l1 9M726 494l1 8" stroke="#0c1428" stroke-width="2.500" fill="none"/>
<path d="M665 507h38v10l-6 4h-28l-4-5z" fill="#1c62f2"/>
<ellipse cx="681" cy="521" rx="16" ry="6" fill="#101828"/>
<path d="M663 526h34v6h-14v6h-23z" fill="#101828"/>
<path d="M682 523l28-4 2 9-4 5-26 3z" fill="#1c62f2"/>
<ellipse cx="697" cy="542" rx="14" ry="11" fill="#1a2035"/>
<path d="M657 545a13 15 0 0 1 26 0z" fill="#101828"/>
<rect x="655" y="543" width="30" height="13" fill="#1c62f2"/>
<rect x="655" y="555" width="30" height="3" rx="1" fill="#101828"/>
<path d="M652 536v9h4v-9z" fill="#101828"/>
<path d="M619 442l15-28 10 5v-20l28-10 11 10 10-10 27 10v20l14-5 13 28-12 10c3 10 2 20-3 29-9 16-30 25-49 25s-42-9-50-26c-4-9-5-18-3-28z" fill="#195cf8" stroke="#195cf8" stroke-width="3" stroke-linejoin="round"/>
<path d="M634 492c12 12 30 15 49 15s38-4 50-17c-10 15-30 19-50 19s-39-4-49-17z" fill="#4a90ff" opacity=".7"/>
<!-- puffs -->
<g filter="url(#soft)">
<circle cx="652" cy="578" r="14" fill="#f2e2fa"/>
<circle cx="662" cy="578" r="18" fill="#f2e2fa"/>
<circle cx="707" cy="578" r="15" fill="#f2e2fa"/>
<circle cx="652" cy="578" r="12" fill="#fff"/>
<circle cx="662" cy="578" r="16" fill="#fff"/>
<circle cx="707" cy="578" r="13" fill="#fff"/>
</g>
<!-- HUD -->
<rect x="596" y="81" width="182" height="54" rx="12" fill="#fdfee9"/>
<circle cx="617.500" cy="108" r="10" fill="none" stroke="#222" stroke-width="1.500" stroke-dasharray="4 2"/>
<circle cx="617.500" cy="108" r="3" fill="#e8e8d8"/>
<text x="639" y="115" style="font-weight:bold;font-size:21px;fill:#071c30;stroke:#071c30;stroke-width:1" textLength="35" lengthAdjust="spacingAndGlyphs">223</text>
<rect x="799.500" y="81.500" width="52" height="52" rx="12" fill="#4259a4" stroke="#b8c4e4"/>
<rect x="818" y="98" width="6" height="22" rx="3" fill="#fff"/>
<rect x="827" y="98" width="7" height="22" rx="3" fill="#eef0ff"/>

<!-- TASKBAR -->
<rect x="0" y="728" width="1366" height="40" fill="#262626"/>
<path d="M16 742l7-1v7h-7zM24 741l8-1.500V748h-8zM16 749h7v7l-7-1zM24 749h8v8.500l-8-1.500z" fill="#fff"/>
<circle cx="74" cy="745" r="5.500" fill="none" stroke="#fff" stroke-width="1.500"/><path d="M70 749l-5 6" stroke="#fff" stroke-width="1.600"/>
<circle cx="120" cy="748" r="6.500" fill="none" stroke="#fff" stroke-width="2"/>
<path d="M161 742h10v12h-10zM159 742h14M159 754h14M174 743h3v3h-3zM174 749h3v2h-3z" fill="none" stroke="#fff" stroke-width="1.300"/>
<path d="M209 738h9l2 2h10v18h-21z" fill="#f4c64e"/><rect x="209" y="743" width="21" height="15" fill="#f8d56a"/><path d="M216 750h8v6h-3v-3h-2v3h-3z" fill="#3a88d8"/>
<rect x="256" y="736" width="24" height="24" rx="4" fill="#2aa0e6"/><path d="M262 741h5v15h-5zM270 741h4v7h-4z" fill="#fff"/>
<ellipse cx="317" cy="748" rx="12" ry="12" fill="#1f7fc8"/><path d="M309 745l16-4-2 8-11 1-3 4 1-4z" fill="#e8f4ff"/>
<ellipse cx="366" cy="751" rx="8" ry="7" fill="#e8a030"/><path d="M356 751c0-17 20-17 20 0" fill="none" stroke="#2020d0" stroke-width="2.500"/><path d="M359 750h14" stroke="#d02020" stroke-width="2"/><rect x="354" y="748" width="4" height="9" fill="#2020d0"/><rect x="374" y="748" width="4" height="9" fill="#2020d0"/>
<path d="M420 736l7 3v18l-7 3-11-10-5 4-3-2v-8l3-2 5 4zm0 7l-6 5 6 5z" fill="#1b8ad6"/>
<use href="#god" x="453" y="737" width="22" height="22"/>
<circle cx="513" cy="748" r="12" fill="#dd4b39"/><path d="M513 748L503 742A12 12 0 0 0 510 760z" fill="#3aa757"/><path d="M513 736a12 12 0 0 1 11 7h-11z" fill="#dd4b39"/><path d="M524 743a12 12 0 0 1-14 17l5-9z" fill="#f4c430"/><circle cx="513" cy="748" r="5" fill="#4285f4" stroke="#fff" stroke-width="1.500"/><circle cx="520" cy="755" r="7" fill="#078f9c"/>
<text x="517" y="759" style="font-size:9px;fill:#fff;font-weight:bold">R</text>
<rect x="539" y="728" width="47" height="40" fill="#4a4a4a"/>
<use href="#god" x="551" y="737" width="22" height="22"/>
<rect x="599" y="738" width="23" height="20" fill="#0c0c0c" stroke="#b0b0b0" stroke-width="1"/><rect x="599" y="738" width="23" height="3" fill="#ccc"/>
<text x="602" y="748" style="font-size:6px;fill:#ddd;font-family:'Liberation Mono',monospace">C:\_</text>
<rect x="651" y="738" width="18" height="15" rx="1" fill="#2f9e6f"/><rect x="651" y="751" width="18" height="7" fill="#cfd8d8"/><circle cx="656" cy="745" r="1.300" fill="#111"/><circle cx="664" cy="745" r="1.300" fill="#111"/><path d="M653 740l2 2M667 740l-2 2" stroke="#dff" />
<rect x="200" y="766" width="40" height="2" fill="#8fd0f5"/>
<rect x="248" y="766" width="40" height="2" fill="#8fd0f5"/>
<rect x="494" y="766" width="40" height="2" fill="#8fd0f5"/>
<rect x="539" y="766" width="47" height="2" fill="#8fd0f5"/>
<rect x="586" y="728" width="1" height="40" fill="#1a1a1a"/>
<!-- tray -->
<circle cx="1133" cy="744" r="2.500" fill="none" stroke="#fff"/><circle cx="1127" cy="748" r="2.500" fill="none" stroke="#fff"/><path d="M1122 755c0-5 9-5 9 0M1130 748c2-1 7-1 8 3" fill="none" stroke="#fff"/>
<path d="M1159 752l6-6 6 6" fill="none" stroke="#fff" stroke-width="1.300"/>
<rect x="1184.500" y="744.500" width="12" height="9" fill="none" stroke="#fff"/><path d="M1183 744v3h3v-3zM1181 747h7v2l-3 2v3h-2v-3l-2-2z" fill="#fff"/>
<path d="M1209 755c0-5 4-10 10-11M1212 755c0-3 3-7 7-8M1215 755c0-1 1-4 4-5" fill="none" stroke="#bbb" stroke-width="1.100"/><circle cx="1219" cy="754" r="1.500" fill="#fff"/>
<path d="M1231 745h3l4-3v13l-4-3h-3z" fill="none" stroke="#fff"/><path d="M1240 745a5 5 0 0 1 0 7M1242 742a9 9 0 0 1 0 13" fill="none" stroke="#fff"/>
<text x="1284" y="743" style="font-size:12px;fill:#fff;text-anchor:middle" textLength="44" lengthAdjust="spacingAndGlyphs">3:53 PM</text>
<text x="1284" y="762" style="font-size:12px;fill:#fff;text-anchor:middle" textLength="47" lengthAdjust="spacingAndGlyphs">3/8/2026</text>
<path d="M1326 741h15v12h-5l-3 3v-3h-7z" fill="#fff"/><path d="M1329 745h9M1329 748h9" stroke="#262626"/>
<rect x="1364" y="730" width="1" height="38" fill="#666"/>
</svg>
</body></html>
